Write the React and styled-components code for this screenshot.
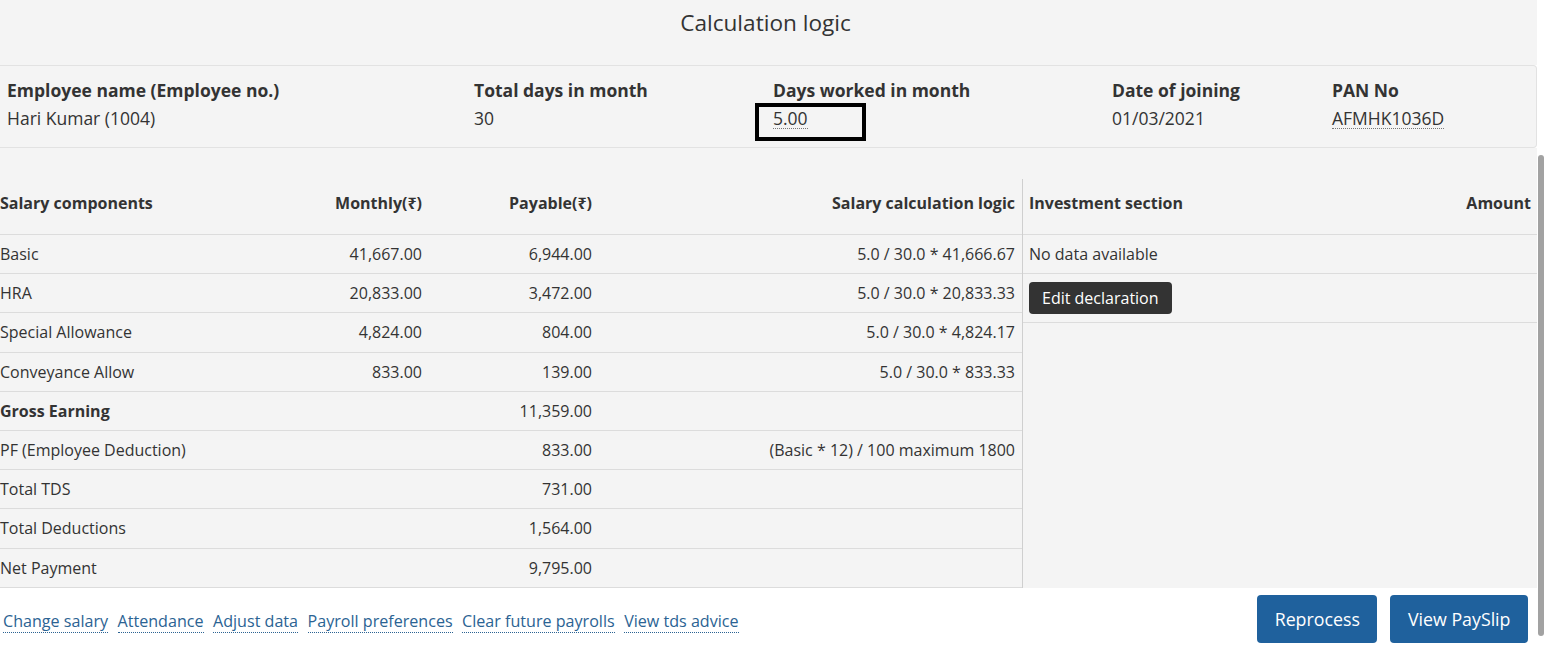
import React from "react";
import styled, { createGlobalStyle } from "styled-components";

const Global = createGlobalStyle`
  html, body { margin: 0; padding: 0; background: #fff; }
  body { font-family: "Open Sans", "Noto Sans", Arial, sans-serif; color: #333; }
  *, *::before, *::after { box-sizing: border-box; }
`;

const Page = styled.div`
  position: relative;
  width: 1544px;
  height: 653px;
  overflow: hidden;
  background: #fff;
`;

const Modal = styled.div`
  width: 1537px;
  display: flex;
  flex-direction: column;
`;

const Title = styled.h2`
  margin: 0;
  height: 65px;
  padding-top: 6px;
  background: #f4f4f4;
  font-size: 22.6px;
  font-weight: 400;
  line-height: 34px;
  text-align: center;
  color: #333;
  padding-right: 6px;
`;

const InfoCard = styled.div`
  display: grid;
  grid-template-columns: 467px 299px 339px 220px 1fr;
  height: 83px;
  padding: 10px 0 0 7px;
  background: #f4f4f4;
  border: 1px solid #e2e2e2;
  border-left: none;
  border-radius: 0 4px 4px 0;
`;

const InfoItem = styled.div`
  display: flex;
  flex-direction: column;
`;

const InfoLabel = styled.div`
  font-size: 17.5px;
  font-weight: 700;
  line-height: 28px;
  color: #333;
`;

const InfoValue = styled.div`
  font-size: 17.5px;
  line-height: 28px;
  color: #333;
`;

const Dotted = styled.span`
  position: relative;
  border-bottom: 1px dotted #777;
  line-height: 20px;
  display: inline-block;
  ${(p) =>
    p.$highlight &&
    `
    &::after {
      content: "";
      position: absolute;
      left: -18px;
      top: -5px;
      width: 111px;
      height: 38px;
      border: 4px solid #000;
    }
  `}
`;

const Gap = styled.div`
  height: 31px;
  background: #f4f4f4;
`;

const Tables = styled.div`
  display: flex;
  background: #f4f4f4;
  height: 409px;
`;

const LeftTable = styled.div`
  width: 1023px;
  border-right: 1px solid #cfcfcf;
`;

const RightTable = styled.div`
  flex: 1;
`;

const Row = styled.div`
  display: grid;
  grid-template-columns: ${(p) => p.$cols};
  align-items: center;
  height: ${(p) => p.$h || "39.2px"};
  padding-bottom: ${(p) => p.$pb || "0"};
  border-bottom: 1px solid #dcdcdc;
`;

const Cell = styled.div`
  font-size: 16px;
  font-weight: ${(p) => (p.$bold ? 700 : 400)};
  text-align: ${(p) => (p.$right ? "right" : "left")};
  padding: ${(p) => (p.$right ? `0 ${p.$pr || "7px"} 0 0` : p.$pl ? `0 0 0 ${p.$pl}` : "0")};
  color: #333;
  white-space: nowrap;
`;

const EditButton = styled.button`
  justify-self: start;
  margin-left: 6px;
  height: 32px;
  padding: 0 13px;
  border: none;
  border-radius: 4px;
  background: #333;
  color: #fff;
  font-family: inherit;
  font-size: 16px;
  cursor: pointer;
`;

const Footer = styled.div`
  display: flex;
  align-items: center;
  justify-content: space-between;
  height: 66px;
  padding: 0 9px 4px 3px;
  background: #fff;
`;

const Links = styled.div`
  display: flex;
  gap: 9.5px;
  padding-top: 6px;
`;

const Link = styled.a`
  font-size: 16.1px;
  color: #2b6393;
  text-decoration: none;
  border-bottom: 1px dotted #2b6393;
  line-height: 21px;
  cursor: pointer;
`;

const Buttons = styled.div`
  display: flex;
  gap: 13px;
`;

const PrimaryButton = styled.button`
  height: 48px;
  padding: 0 17.5px;
  border: none;
  border-radius: 4px;
  background: #1f619d;
  color: #fff;
  font-family: inherit;
  font-size: 17.8px;
  cursor: pointer;
`;

const ScrollThumb = styled.div`
  position: absolute;
  right: 0;
  top: 155px;
  width: 6px;
  height: 481px;
  border-radius: 3px;
  background: #a2a2a2;
`;

const LEFT_COLS = "260px 169px 170px 1fr";
const RIGHT_COLS = "1fr auto";

const rows = [
  { name: "Basic", monthly: "41,667.00", payable: "6,944.00", logic: "5.0 / 30.0 * 41,666.67" },
  { name: "HRA", monthly: "20,833.00", payable: "3,472.00", logic: "5.0 / 30.0 * 20,833.33" },
  { name: "Special Allowance", monthly: "4,824.00", payable: "804.00", logic: "5.0 / 30.0 * 4,824.17" },
  { name: "Conveyance Allow", monthly: "833.00", payable: "139.00", logic: "5.0 / 30.0 * 833.33" },
  { name: "Gross Earning", monthly: "", payable: "11,359.00", logic: "", bold: true },
  { name: "PF (Employee Deduction)", monthly: "", payable: "833.00", logic: "(Basic * 12) / 100 maximum 1800" },
  { name: "Total TDS", monthly: "", payable: "731.00", logic: "" },
  { name: "Total Deductions", monthly: "", payable: "1,564.00", logic: "" },
  { name: "Net Payment", monthly: "", payable: "9,795.00", logic: "" },
];

const links = [
  "Change salary",
  "Attendance",
  "Adjust data",
  "Payroll preferences",
  "Clear future payrolls",
  "View tds advice",
];

export default function App() {
  return (
    <Page>
      <Global />
      <Modal>
        <Title>Calculation logic</Title>
        <InfoCard>
          <InfoItem>
            <InfoLabel>Employee name (Employee no.)</InfoLabel>
            <InfoValue>Hari Kumar (1004)</InfoValue>
          </InfoItem>
          <InfoItem>
            <InfoLabel>Total days in month</InfoLabel>
            <InfoValue>30</InfoValue>
          </InfoItem>
          <InfoItem>
            <InfoLabel>Days worked in month</InfoLabel>
            <InfoValue>
              <Dotted $highlight>5.00</Dotted>
            </InfoValue>
          </InfoItem>
          <InfoItem>
            <InfoLabel>Date of joining</InfoLabel>
            <InfoValue>01/03/2021</InfoValue>
          </InfoItem>
          <InfoItem>
            <InfoLabel>PAN No</InfoLabel>
            <InfoValue>
              <Dotted>AFMHK1036D</Dotted>
            </InfoValue>
          </InfoItem>
        </InfoCard>
        <Gap />
        <Tables>
          <LeftTable>
            <Row $cols={LEFT_COLS} $h="56px" $pb="7px">
              <Cell $bold>Salary components</Cell>
              <Cell $bold $right>Monthly(₹)</Cell>
              <Cell $bold $right>Payable(₹)</Cell>
              <Cell $bold $right>Salary calculation logic</Cell>
            </Row>
            {rows.map((r) => (
              <Row key={r.name} $cols={LEFT_COLS}>
                <Cell $bold={r.bold}>{r.name}</Cell>
                <Cell $right>{r.monthly}</Cell>
                <Cell $right>{r.payable}</Cell>
                <Cell $right>{r.logic}</Cell>
              </Row>
            ))}
          </LeftTable>
          <RightTable>
            <Row $cols={RIGHT_COLS} $h="56px" $pb="7px">
              <Cell $bold $pl="6px">Investment section</Cell>
              <Cell $bold $right $pr="6px">Amount</Cell>
            </Row>
            <Row $cols={RIGHT_COLS}>
              <Cell $pl="6px">No data available</Cell>
              <Cell $right />
            </Row>
            <Row $cols={RIGHT_COLS} $h="49px">
              <EditButton>Edit declaration</EditButton>
            </Row>
          </RightTable>
        </Tables>
        <Footer>
          <Links>
            {links.map((l) => (
              <Link key={l}>{l}</Link>
            ))}
          </Links>
          <Buttons>
            <PrimaryButton>Reprocess</PrimaryButton>
            <PrimaryButton>View PaySlip</PrimaryButton>
          </Buttons>
        </Footer>
      </Modal>
      <ScrollThumb />
    </Page>
  );
}
